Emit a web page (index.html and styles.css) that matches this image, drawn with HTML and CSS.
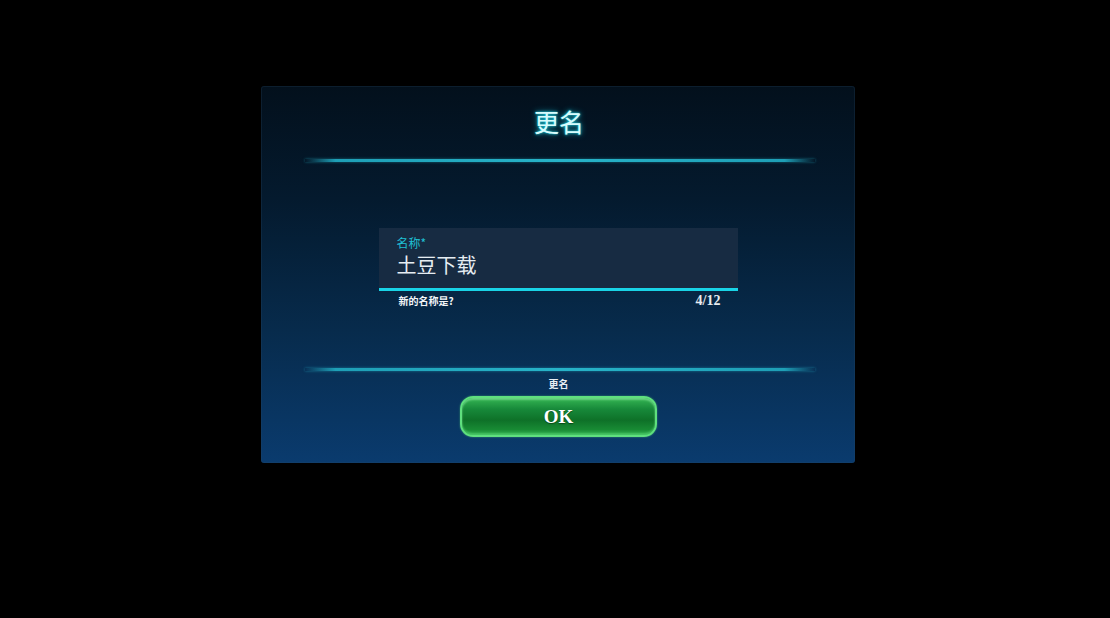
FILE: index.html
```html
<!DOCTYPE html>
<html lang="zh">
<head>
<meta charset="utf-8">
<link rel="stylesheet" href="styles.css">
</head>
<body>
<div class="screen">
  <div class="panel">
    <div class="title">更名</div>
    <div class="divider divider-top"></div>
    <div class="field">
      <div class="field-label">名称*</div>
      <div class="field-value">土豆下载</div>
    </div>
    <div class="helper">
      <span class="helper-text">新的名称是?</span>
      <span class="counter">4/12</span>
    </div>
    <div class="divider divider-bottom"></div>
    <div class="action-label">更名</div>
    <button class="ok-btn">OK</button>
  </div>
</div>
</body>
</html>
```
FILE: styles.css
```css
html, body {
  margin: 0;
  padding: 0;
  background: #000;
}
.screen {
  width: 1110px;
  height: 618px;
  background: #000;
  padding-top: 86px;
  padding-left: 261px;
  box-sizing: border-box;
  font-family: "Noto Sans CJK SC", "Noto Sans", sans-serif;
}
.panel {
  width: 594px;
  height: 377px;
  box-sizing: border-box;
  border-radius: 3px;
  background: linear-gradient(to bottom, #03101c 0%, #041a2e 30%, #072b4c 65%, #0a3b6e 100%);
  display: flex;
  flex-direction: column;
  align-items: center;
  box-shadow: inset 0 0 0 1px rgba(40, 70, 100, 0.25);
}
.title {
  margin-top: 20px;
  height: 30px;
  line-height: 30px;
  font-size: 25px;
  color: #d8fbfb;
  text-shadow: 0 0 3px #1fc6d6, 0 0 6px #15a3b6, 0 0 1px #2ee0ee;
  margin-left: 2px;
}
.divider {
  width: 510px;
  height: 3px;
  margin-left: 4px;
  background: linear-gradient(to right, rgba(40,190,210,0) 0%, #1e9fb6 6%, #27b3c8 50%, #1e9fb6 94%, rgba(40,190,210,0) 100%);
  box-shadow: 0 0 3px rgba(40, 190, 210, 0.5);
}
.divider-top {
  margin-top: 23px;
}
.field {
  margin-top: 66px;
  width: 359px;
  height: 63px;
  box-sizing: border-box;
  background: #172b42;
  border-bottom: 3px solid #19d3e6;
  padding: 8px 18px 0 18px;
  display: flex;
  flex-direction: column;
  gap: 4px;
}
.field-label {
  font-size: 12px;
  line-height: 14px;
  color: #1fc0d4;
}
.field-value {
  font-size: 20px;
  line-height: 22px;
  color: #e6edf2;
}
.helper {
  margin-top: 3px;
  width: 359px;
  box-sizing: border-box;
  padding: 0 17px 0 20px;
  display: flex;
  justify-content: space-between;
  align-items: center;
  height: 14px;
}
.helper-text {
  font-size: 10px;
  line-height: 14px;
  color: #f2f5f8;
  font-weight: 700;
}
.counter {
  font-family: "Liberation Serif", serif;
  font-weight: 700;
  font-size: 14px;
  line-height: 14px;
  color: #e8ecf0;
}
.divider-bottom {
  margin-top: 60px;
}
.action-label {
  margin-top: 6px;
  font-size: 10px;
  line-height: 14px;
  color: #e8eef4;
  font-weight: 700;
  margin-left: 1px;
}
.ok-btn {
  margin-top: 5px;
  width: 197px;
  height: 41px;
  border-radius: 13px;
  border: 2px solid #5fe07e;
  background: linear-gradient(to bottom, #35b553 0%, #17893a 30%, #0e7128 60%, #188a34 85%, #2fb04e 100%);
  box-shadow: inset 0 2px 2px rgba(170, 255, 190, 0.45), inset 0 -2px 2px rgba(120, 240, 150, 0.35), 0 0 2px rgba(90, 220, 120, 0.6);
  color: #ffffff;
  font-family: "Liberation Serif", serif;
  font-weight: 700;
  font-size: 19px;
  padding: 0;
  margin-left: 1px;
  text-shadow: 0 1px 1px rgba(0, 40, 10, 0.6);
}
```
